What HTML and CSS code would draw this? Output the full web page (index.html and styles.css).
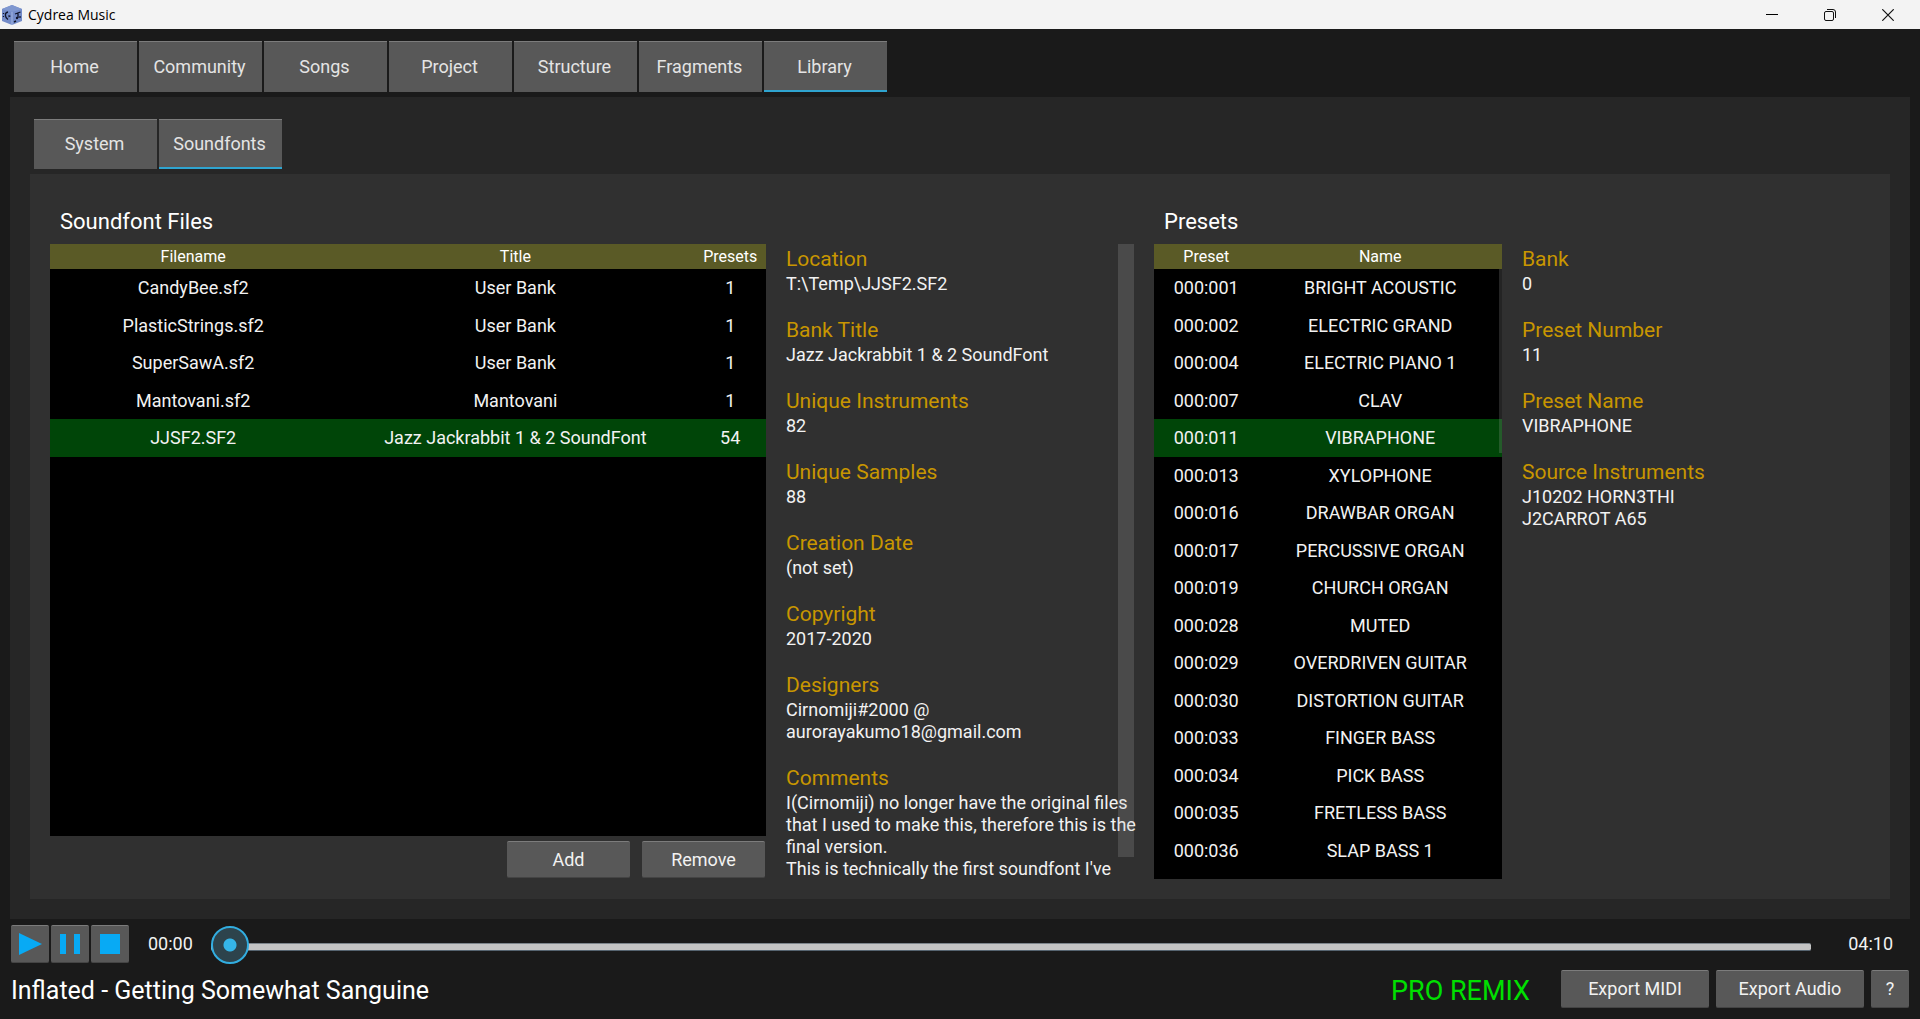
FILE: index.html
```html
<!DOCTYPE html>
<html lang="en">
<head>
    <meta charset="UTF-8">
    <meta name="viewport" content="width=device-width, initial-scale=1.0">
    <title>Cydrea Music</title>
    <link rel="stylesheet" href="styles.css">
</head>
<body>
    <header class="titlebar">
        <svg class="app-icon" viewBox="0 0 20 20" width="20" height="20" aria-hidden="true">
            <path d="M10 0 L20 4 V16 L10 20 L0 16 V4 Z" fill="#738bc8"/>
            <path d="M0 4 L10 0 L20 4 L10 7 Z" fill="#7f97d0"/>
            <path d="M10 7 V20" stroke="#a3b6e2" stroke-width="1"/>
            <path d="M6 7 C2.500 7.500 2.500 12 6 14.500 M1.500 8 V9 M1.500 11 V12" fill="none" stroke="#10142a" stroke-width="1.300"/>
            <path d="M6.500 10 L9 11 L6.500 12.500 Z" fill="#10142a"/>
            <path d="M13 9 L18.500 7 M16 8 V13 M18 11 V13" fill="none" stroke="#10142a" stroke-width="1.300"/>
            <circle cx="15" cy="13" r="1.200" fill="#10142a"/>
            <path d="M12 17 L14 16" stroke="#10142a" stroke-width="1.500"/>
        </svg>
        <span class="app-title">Cydrea Music</span>
        <div class="window-controls">
            <button class="window-button" aria-label="Minimize">
                <svg viewBox="0 0 12 12" width="12" height="12"><path d="M0 5.500 H12" stroke="#000"/></svg>
            </button>
            <button class="window-button" aria-label="Restore">
                <svg viewBox="0 0 12 12" width="12" height="12" fill="none" stroke="#111"><rect x="0.500" y="2.500" width="9" height="9" rx="1.500"/><path d="M3 0.500 H9 Q11.500 0.500 11.500 3 V9"/></svg>
            </button>
            <button class="window-button" aria-label="Close">
                <svg viewBox="0 0 12 12" width="12" height="12"><path d="M0.300 0.300 L11.700 11.700 M11.700 0.300 L0.300 11.700" stroke="#111" stroke-width="1.200"/></svg>
            </button>
        </div>
    </header>

    <nav class="tabs main-tabs">
        <button class="tab">Home</button>
        <button class="tab">Community</button>
        <button class="tab">Songs</button>
        <button class="tab">Project</button>
        <button class="tab">Structure</button>
        <button class="tab">Fragments</button>
        <button class="tab active">Library</button>
    </nav>

    <main class="library">
        <nav class="tabs">
            <button class="tab">System</button>
            <button class="tab active">Soundfonts</button>
        </nav>

        <div class="soundfonts">
            <section class="files">
                <h2>Soundfont Files</h2>
                <div class="list">
                    <table>
                        <thead>
                            <tr><th class="col-file">Filename</th><th class="col-title">Title</th><th class="col-count">Presets</th></tr>
                        </thead>
                        <tbody>
                            <tr><td>CandyBee.sf2</td><td>User Bank</td><td>1</td></tr>
                            <tr><td>PlasticStrings.sf2</td><td>User Bank</td><td>1</td></tr>
                            <tr><td>SuperSawA.sf2</td><td>User Bank</td><td>1</td></tr>
                            <tr><td>Mantovani.sf2</td><td>Mantovani</td><td>1</td></tr>
                            <tr class="selected"><td>JJSF2.SF2</td><td>Jazz Jackrabbit 1 &amp; 2 SoundFont</td><td>54</td></tr>
                        </tbody>
                    </table>
                </div>
                <div class="file-actions">
                    <button class="btn">Add</button>
                    <button class="btn">Remove</button>
                </div>
            </section>

            <section class="details scrolling">
                <dl>
                    <dt>Location</dt>
                    <dd>T:\Temp\JJSF2.SF2</dd>
                    <dt>Bank Title</dt>
                    <dd>Jazz Jackrabbit 1 &amp; 2 SoundFont</dd>
                    <dt>Unique Instruments</dt>
                    <dd>82</dd>
                    <dt>Unique Samples</dt>
                    <dd>88</dd>
                    <dt>Creation Date</dt>
                    <dd>(not set)</dd>
                    <dt>Copyright</dt>
                    <dd>2017-2020</dd>
                    <dt>Designers</dt>
                    <dd>Cirnomiji#2000 @<br>aurorayakumo18@gmail.com</dd>
                    <dt>Comments</dt>
                    <dd>I(Cirnomiji) no longer have the original files that I used to make this, therefore this is the final version.<br>This is technically the first soundfont I've</dd>
                </dl>
            </section>

            <section class="presets">
                <h2>Presets</h2>
                <div class="list">
                    <table>
                        <thead>
                            <tr><th class="col-preset">Preset</th><th>Name</th></tr>
                        </thead>
                        <tbody>
                            <tr><td>000:001</td><td>BRIGHT ACOUSTIC</td></tr>
                            <tr><td>000:002</td><td>ELECTRIC GRAND</td></tr>
                            <tr><td>000:004</td><td>ELECTRIC PIANO 1</td></tr>
                            <tr><td>000:007</td><td>CLAV</td></tr>
                            <tr class="selected"><td>000:011</td><td>VIBRAPHONE</td></tr>
                            <tr><td>000:013</td><td>XYLOPHONE</td></tr>
                            <tr><td>000:016</td><td>DRAWBAR ORGAN</td></tr>
                            <tr><td>000:017</td><td>PERCUSSIVE ORGAN</td></tr>
                            <tr><td>000:019</td><td>CHURCH ORGAN</td></tr>
                            <tr><td>000:028</td><td>MUTED</td></tr>
                            <tr><td>000:029</td><td>OVERDRIVEN GUITAR</td></tr>
                            <tr><td>000:030</td><td>DISTORTION GUITAR</td></tr>
                            <tr><td>000:033</td><td>FINGER BASS</td></tr>
                            <tr><td>000:034</td><td>PICK BASS</td></tr>
                            <tr><td>000:035</td><td>FRETLESS BASS</td></tr>
                            <tr><td>000:036</td><td>SLAP BASS 1</td></tr>
                        </tbody>
                    </table>
                </div>
            </section>

            <section class="details">
                <dl>
                    <dt>Bank</dt>
                    <dd>0</dd>
                    <dt>Preset Number</dt>
                    <dd>11</dd>
                    <dt>Preset Name</dt>
                    <dd>VIBRAPHONE</dd>
                    <dt>Source Instruments</dt>
                    <dd>J10202 HORN3THI<br>J2CARROT A65</dd>
                </dl>
            </section>
        </div>
    </main>

    <footer class="player">
        <div class="transport">
            <button class="btn icon-btn" aria-label="Play">
                <svg viewBox="0 0 38 38" width="38" height="38"><path d="M8 8 L31 19 L8 30 Z" fill="#08aaf4"/></svg>
            </button>
            <button class="btn icon-btn" aria-label="Pause">
                <svg viewBox="0 0 38 38" width="38" height="38"><path d="M9 9 H15 V29 H9 Z M23 9 H29 V29 H23 Z" fill="#08aaf4"/></svg>
            </button>
            <button class="btn icon-btn" aria-label="Stop">
                <svg viewBox="0 0 38 38" width="38" height="38"><rect x="9" y="9" width="20" height="20" fill="#08aaf4"/></svg>
            </button>
            <span class="time">00:00</span>
            <input class="seek" type="range" min="0" max="250" value="0" aria-label="Playback position">
            <span class="time">04:10</span>
        </div>
        <div class="song-bar">
            <span class="song-title">Inflated - Getting Somewhat Sanguine</span>
            <span class="remix">PRO REMIX</span>
            <button class="btn export">Export MIDI</button>
            <button class="btn export">Export Audio</button>
            <button class="btn icon-btn">?</button>
        </div>
    </footer>
</body>
</html>
```
FILE: styles.css
```css
* {
    box-sizing: border-box;
}

body {
    display: flex;
    flex-direction: column;
    height: 100vh;
    margin: 0;
    background: #1a1a1a;
    color: #f2f2f2;
    font-family: Roboto, sans-serif;
    font-size: 18px;
    line-height: 22px;
    overflow: hidden;
}

button {
    padding: 0;
    border: none;
    color: inherit;
    font: inherit;
    cursor: pointer;
}

svg {
    display: block;
}

/* window title bar */
.titlebar {
    display: flex;
    align-items: center;
    height: 29px;
    padding: 0 3px 0 2px;
    background: #f3f3f3;
    color: #000;
}

.app-title {
    margin-left: 6px;
    font-family: "Open Sans", sans-serif;
    font-size: 14px;
}

.window-controls {
    display: flex;
    height: 100%;
    margin-left: auto;
}

.window-button {
    display: flex;
    align-items: center;
    justify-content: center;
    width: 58px;
    background: none;
}

/* tabs */
.tabs {
    display: flex;
    gap: 2px;
    padding-left: 4px;
}

.main-tabs {
    padding: 12px 14px 5px;
}

.tab {
    width: 123px;
    height: 50px;
    padding-right: 2px;
    background: #585858;
    border-top: 1px solid #7c7c7c;
    border-bottom: 2px solid #585858;
    color: #e4e4e4;
}

.main-tabs .tab {
    height: 51px;
    padding-top: 1px;
}

.tab.active {
    border-bottom-color: #2fa4d0;
}

/* library page */
.library {
    display: flex;
    flex: 1;
    flex-direction: column;
    gap: 5px;
    min-height: 0;
    margin: 0 10px;
    padding: 22px 20px 20px;
    background: #262626;
}

.soundfonts {
    display: grid;
    flex: 1;
    grid-template-columns: repeat(5, minmax(0, 1fr));
    gap: 20px;
    min-height: 0;
    padding: 26px 20px 20px;
    background: #303030;
}

.files,
.presets {
    display: flex;
    flex-direction: column;
    min-height: 0;
}

.files {
    grid-column: span 2;
}

h2 {
    margin: 0;
    padding-left: 10px;
    color: #fff;
    font-size: 22px;
    font-weight: 400;
    line-height: 44px;
}

.list {
    position: relative;
    flex: 1;
    background: #000;
}

table {
    width: 100%;
    border-collapse: collapse;
    table-layout: fixed;
    text-align: center;
}

th {
    height: 25px;
    padding: 0;
    background: #5a5a26;
    color: #fff;
    font-size: 16px;
    font-weight: 400;
}

td {
    height: 38px;
    padding: 0;
}

tr:nth-child(even) td {
    height: 37px;
}

.selected {
    background: #004508;
}

.col-file {
    width: 40%;
}

.col-title {
    width: 50%;
}

.col-count {
    width: 10%;
}

.col-preset {
    width: 30%;
}

.presets .list::after {
    content: "";
    position: absolute;
    top: 25px;
    right: 0;
    width: 3px;
    height: 184px;
    background: rgba(180, 180, 180, 0.2);
}

.file-actions {
    display: flex;
    justify-content: flex-end;
    gap: 12px;
    padding: 5px 1px 1px;
}

.file-actions .btn {
    width: 123px;
    height: 37px;
}

.btn {
    background: #585858;
    border-top: 1px solid #7c7c7c;
    border-bottom: 1px solid #444;
    border-radius: 2px;
}

/* detail columns */
.details {
    position: relative;
    min-height: 0;
    margin-top: 44px;
    overflow-y: clip;
}

.details.scrolling::after {
    content: "";
    position: absolute;
    top: 0;
    right: 0;
    bottom: 22px;
    width: 16px;
    background: rgba(180, 180, 180, 0.2);
}

/* long comments may run a little into the column gap */
dl {
    margin: 0 -10px 0 0;
}

dt {
    padding-top: 2px;
    color: #c89600;
    font-size: 21px;
    line-height: 27px;
}

dd {
    margin: 0 0 20px;
}

/* player */
.player {
    padding: 6px 11px 11px;
}

.transport,
.song-bar {
    display: flex;
    align-items: center;
}

.transport {
    gap: 2px;
}

.icon-btn {
    width: 38px;
    height: 38px;
}

.icon-btn svg {
    margin: -1px 0;
}

.time {
    padding: 0 16px 0 17px;
}

.seek {
    flex: 1;
    height: 38px;
    margin: 0 18px 0 0;
    padding-top: 6px;
    appearance: none;
    background: none;
}

.seek::-webkit-slider-runnable-track {
    height: 8px;
    background: #c4c4c4;
    border-top: 1px solid #7d858c;
    border-bottom: 1px solid #566470;
    border-radius: 2px;
}

.seek::-webkit-slider-thumb {
    appearance: none;
    width: 38px;
    height: 38px;
    margin-top: -18px;
    border: 2px solid #32ade0;
    border-radius: 50%;
    background: radial-gradient(circle, #35b5e8 0 6px, #2d434c 7px);
}

.song-bar {
    gap: 7px;
    margin-top: 7px;
}

.song-title,
.remix {
    padding-top: 4px;
    line-height: 34px;
}

.song-title {
    flex: 1;
    color: #fff;
    font-size: 25px;
}

.remix {
    margin-right: 24px;
    color: #00e000;
    font-size: 27px;
}

.export {
    width: 148px;
    height: 38px;
}
```
